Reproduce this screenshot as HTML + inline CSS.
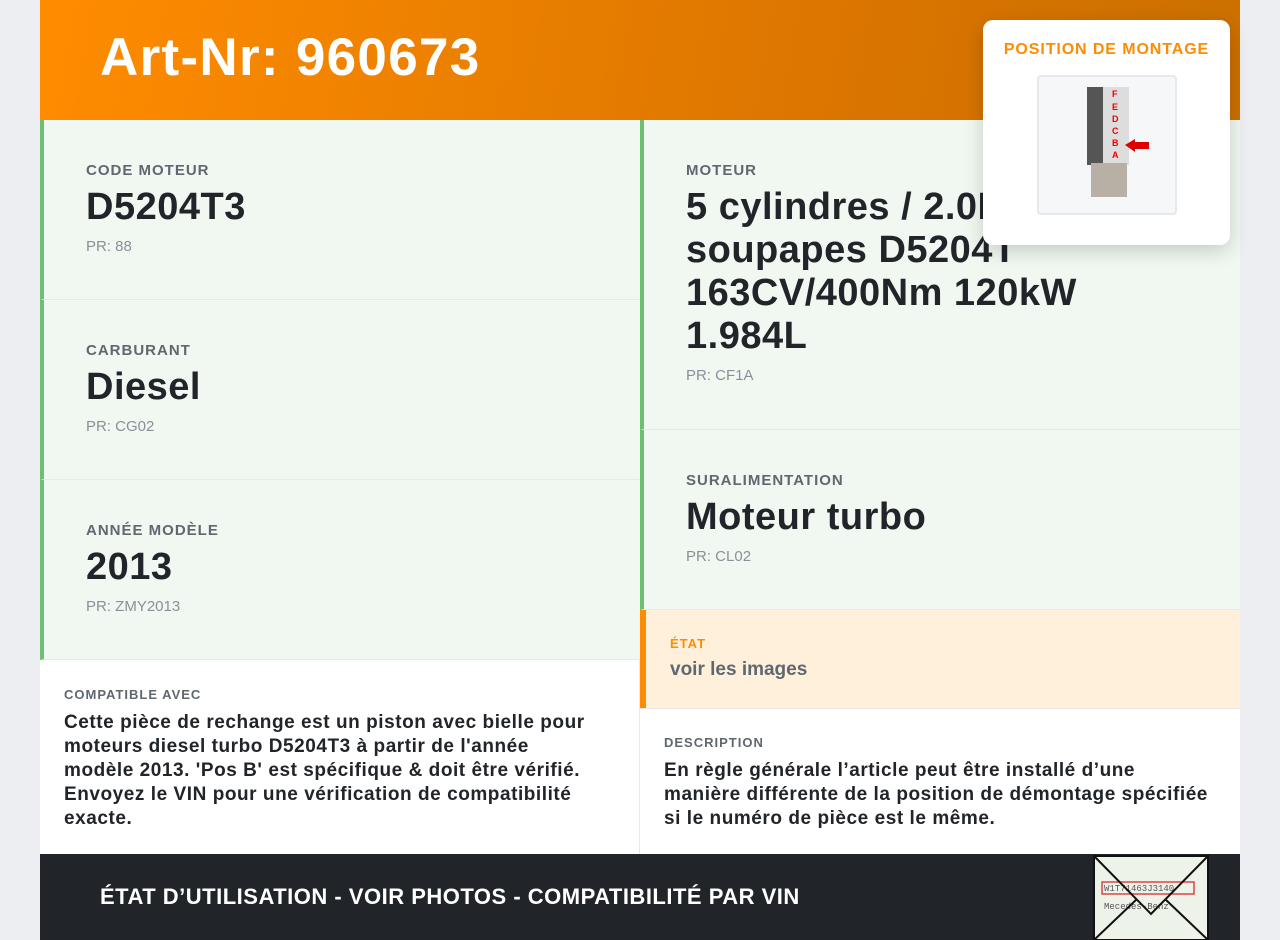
<!DOCTYPE html><html><head><meta charset="utf-8"><style>
*{box-sizing:border-box;margin:0;padding:0}
body{width:1280px;height:940px;background:#eceef1;font-family:"Liberation Sans",sans-serif;position:relative;overflow:hidden;color:#212529}
.wrap{position:absolute;left:40px;top:0;width:1200px;height:940px;background:#fff}
.hdr{position:absolute;left:0;top:0;width:1200px;height:120px;background:linear-gradient(100deg,#ff8c00,#d97400 70%,#cc7000)}
.hdr h1{position:absolute;left:60px;top:27px;color:#fff;font-size:53px;font-weight:bold;letter-spacing:1.3px}
.cell{position:absolute;background:#f1f8f1;border-left:4px solid #6cc070;border-bottom:1px solid #e3ebe3;padding-left:42px}
.lab{font-size:15px;font-weight:bold;color:#5f6770;letter-spacing:1px;margin-top:42px}
.val{font-size:38px;font-weight:bold;color:#212529;margin-top:7px;line-height:43px;letter-spacing:.5px;white-space:nowrap}
.pr{font-size:15px;color:#8a9098;margin-top:9px}
.sm{font-size:13px;font-weight:bold;color:#5f6770;letter-spacing:1px}
.txt{font-size:19px;font-weight:bold;line-height:24px;color:#212529;margin-top:9px;letter-spacing:.55px;white-space:nowrap}
.pop{position:absolute;left:983px;top:20px;width:247px;height:225px;background:#fff;border-radius:10px;box-shadow:0 6px 20px rgba(0,0,0,.18)}
.foot{position:absolute;left:0;top:854px;width:1200px;height:86px;background:#212529;color:#fff;font-size:22px;font-weight:bold;padding:30px 0 0 60px;letter-spacing:.5px}
</style></head><body>
<div class="wrap">
<div class="hdr"><h1>Art-Nr: 960673</h1></div>
<div class="cell" style="left:0;top:120px;width:600px;height:180px"><div class="lab">CODE MOTEUR</div><div class="val">D5204T3</div><div class="pr">PR: 88</div></div>
<div class="cell" style="left:0;top:300px;width:600px;height:180px"><div class="lab">CARBURANT</div><div class="val">Diesel</div><div class="pr">PR: CG02</div></div>
<div class="cell" style="left:0;top:480px;width:600px;height:180px"><div class="lab">ANNÉE MODÈLE</div><div class="val">2013</div><div class="pr">PR: ZMY2013</div></div>
<div class="cell" style="left:600px;top:120px;width:600px;height:310px"><div class="lab">MOTEUR</div><div class="val">5 cylindres / 2.0L 20<br>soupapes D5204T<br>163CV/400Nm 120kW<br>1.984L</div><div class="pr">PR: CF1A</div></div>
<div class="cell" style="left:600px;top:430px;width:600px;height:180px"><div class="lab">SURALIMENTATION</div><div class="val">Moteur turbo</div><div class="pr">PR: CL02</div></div>
<div style="position:absolute;left:600px;top:610px;width:600px;height:98px;background:#fff0dc;border-left:6px solid #ff8c00;padding:26px 0 0 24px"><div class="sm" style="color:#ff8c00">ÉTAT</div><div style="font-size:19px;font-weight:bold;color:#5f6770;margin-top:8px">voir les images</div></div>
<div style="position:absolute;left:0;top:660px;width:600px;height:194px;border-right:1px solid #e8e8e8;padding:27px 0 0 24px"><div class="sm">COMPATIBLE AVEC</div><div class="txt">Cette pièce de rechange est un piston avec bielle pour<br>moteurs diesel turbo D5204T3 à partir de l'année<br>modèle 2013. 'Pos B' est spécifique &amp; doit être vérifié.<br>Envoyez le VIN pour une vérification de compatibilité<br>exacte.</div></div>
<div style="position:absolute;left:600px;top:708px;width:600px;height:146px;border-top:1px solid #e8e8e8;padding:26px 0 0 24px"><div class="sm">DESCRIPTION</div><div class="txt">En règle générale l’article peut être installé d’une<br>manière différente de la position de démontage spécifiée<br>si le numéro de pièce est le même.</div></div>
<div class="foot">ÉTAT D’UTILISATION - VOIR PHOTOS - COMPATIBILITÉ PAR VIN</div>
<svg style="position:absolute;left:1052px;top:854px" width="118" height="86" viewBox="0 0 118 86"><rect x="2" y="2" width="114" height="84" fill="#eef3ea" stroke="#111" stroke-width="2"/><rect x="10" y="28" width="92" height="12" fill="none" stroke="#d44" stroke-width="1.5"/><text x="12" y="37" font-size="9" fill="#555" font-family="Liberation Mono">W1T71463J3140</text><text x="12" y="55" font-size="9" fill="#555" font-family="Liberation Mono">Mecedes-Benz</text><path d="M2 2 L59 60 L116 2 M2 86 L45 45 M116 86 L73 45" fill="none" stroke="#111" stroke-width="2"/></svg>
</div>
<div class="pop"><div style="text-align:center;color:#ff8c00;font-size:16px;font-weight:bold;letter-spacing:.9px;margin-top:21px">POSITION DE MONTAGE</div>
<div style="position:absolute;left:54px;top:55px;width:140px;height:140px;background:#f6f7f9;border:2px solid #e5e8ec;border-radius:4px">
<div style="position:absolute;left:48px;top:10px;width:22px;height:78px;background:#555"></div>
<div style="position:absolute;left:64px;top:10px;width:26px;height:78px;background:#ddd"></div>
<div style="position:absolute;left:52px;top:86px;width:36px;height:34px;background:#b8b0a4"></div>
<svg style="position:absolute;left:64px;top:10px" width="50" height="80"><g fill="#e00" font-size="9" font-weight="bold" font-family="Liberation Sans"><text x="9" y="10">F</text><text x="9" y="23">E</text><text x="9" y="35">D</text><text x="9" y="47">C</text><text x="9" y="59">B</text><text x="9" y="71">A</text></g><path d="M22 58 L32 52 L32 55 L46 55 L46 62 L32 62 L32 65 Z" fill="#d00"/></svg>
</div></div>
</body></html>
